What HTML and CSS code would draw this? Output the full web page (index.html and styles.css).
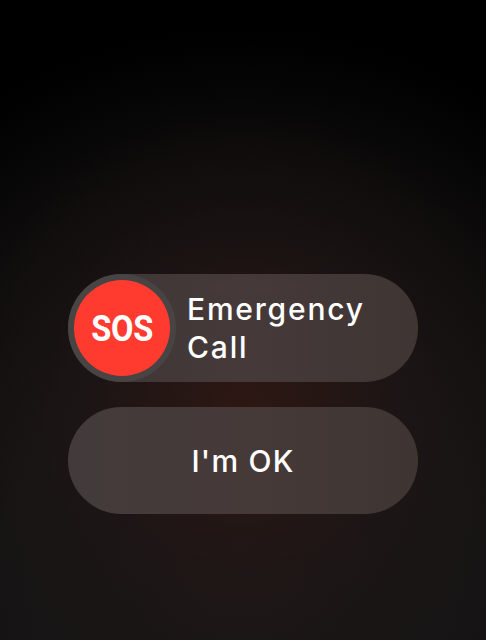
FILE: index.html
```html
<!DOCTYPE html>
<html>
<head>
<meta charset="utf-8">
<link rel="stylesheet" href="styles.css">
</head>
<body>
<main class="screen">
  <div class="actions">
    <div class="slider">
      <div class="knob-ring">
        <div class="knob"><span class="sos">SOS</span></div>
      </div>
      <div class="slider-label">Emergency<br>Call</div>
    </div>
    <button class="ok-button">I'm OK</button>
  </div>
</main>
</body>
</html>
```
FILE: styles.css
```css
html, body {
  margin: 0;
  padding: 0;
  width: 486px;
  height: 640px;
  overflow: hidden;
}
body {
  background: #000;
  font-family: Inter, Roboto, "Noto Sans", sans-serif;
}
.screen {
  width: 486px;
  height: 640px;
  background:
    radial-gradient(ellipse 280px 300px at 243px 410px, rgba(55, 24, 18, 0.7) 0%, rgba(38, 22, 20, 0.35) 55%, rgba(22, 20, 20, 0) 100%),
    radial-gradient(ellipse 520px 560px at 243px 560px, #1a1717 0%, #161414 45%, #0e0c0c 70%, #000 95%);
  box-sizing: border-box;
  padding-top: 274px;
  padding-left: 68px;
}
.actions {
  width: 350px;
  display: flex;
  flex-direction: column;
  gap: 25px;
}
.slider {
  height: 108px;
  border-radius: 54px;
  background: linear-gradient(90deg, #3f3535 0%, #453a39 50%, #3f3533 100%);
  display: flex;
  align-items: center;
}
.knob-ring {
  width: 108px;
  height: 108px;
  border-radius: 50%;
  background: #484444;
  display: flex;
  align-items: center;
  justify-content: center;
  flex: none;
}
.knob {
  width: 96px;
  height: 96px;
  border-radius: 50%;
  background: #ff3b30;
  display: flex;
  align-items: center;
  justify-content: center;
}
.sos {
  color: #fff;
  font-family: Roboto, "Liberation Sans", sans-serif;
  font-weight: 700;
  font-size: 37px;
  letter-spacing: -0.3px;
  display: inline-block;
  transform: scaleX(0.88);
}
.slider-label {
  margin-left: 11px;
  color: #fff;
  font-size: 30px;
  font-weight: 500;
  line-height: 38px;
  letter-spacing: 1.8px;
}
.ok-button {
  height: 107px;
  border: none;
  border-radius: 54px;
  background: linear-gradient(90deg, #433b3b 0%, #463a39 50%, #3e3532 100%);
  color: #fff;
  font-family: Inter, Roboto, "Noto Sans", sans-serif;
  font-size: 30px;
  font-weight: 500;
  letter-spacing: 1.2px;
  padding: 0;
}
```
